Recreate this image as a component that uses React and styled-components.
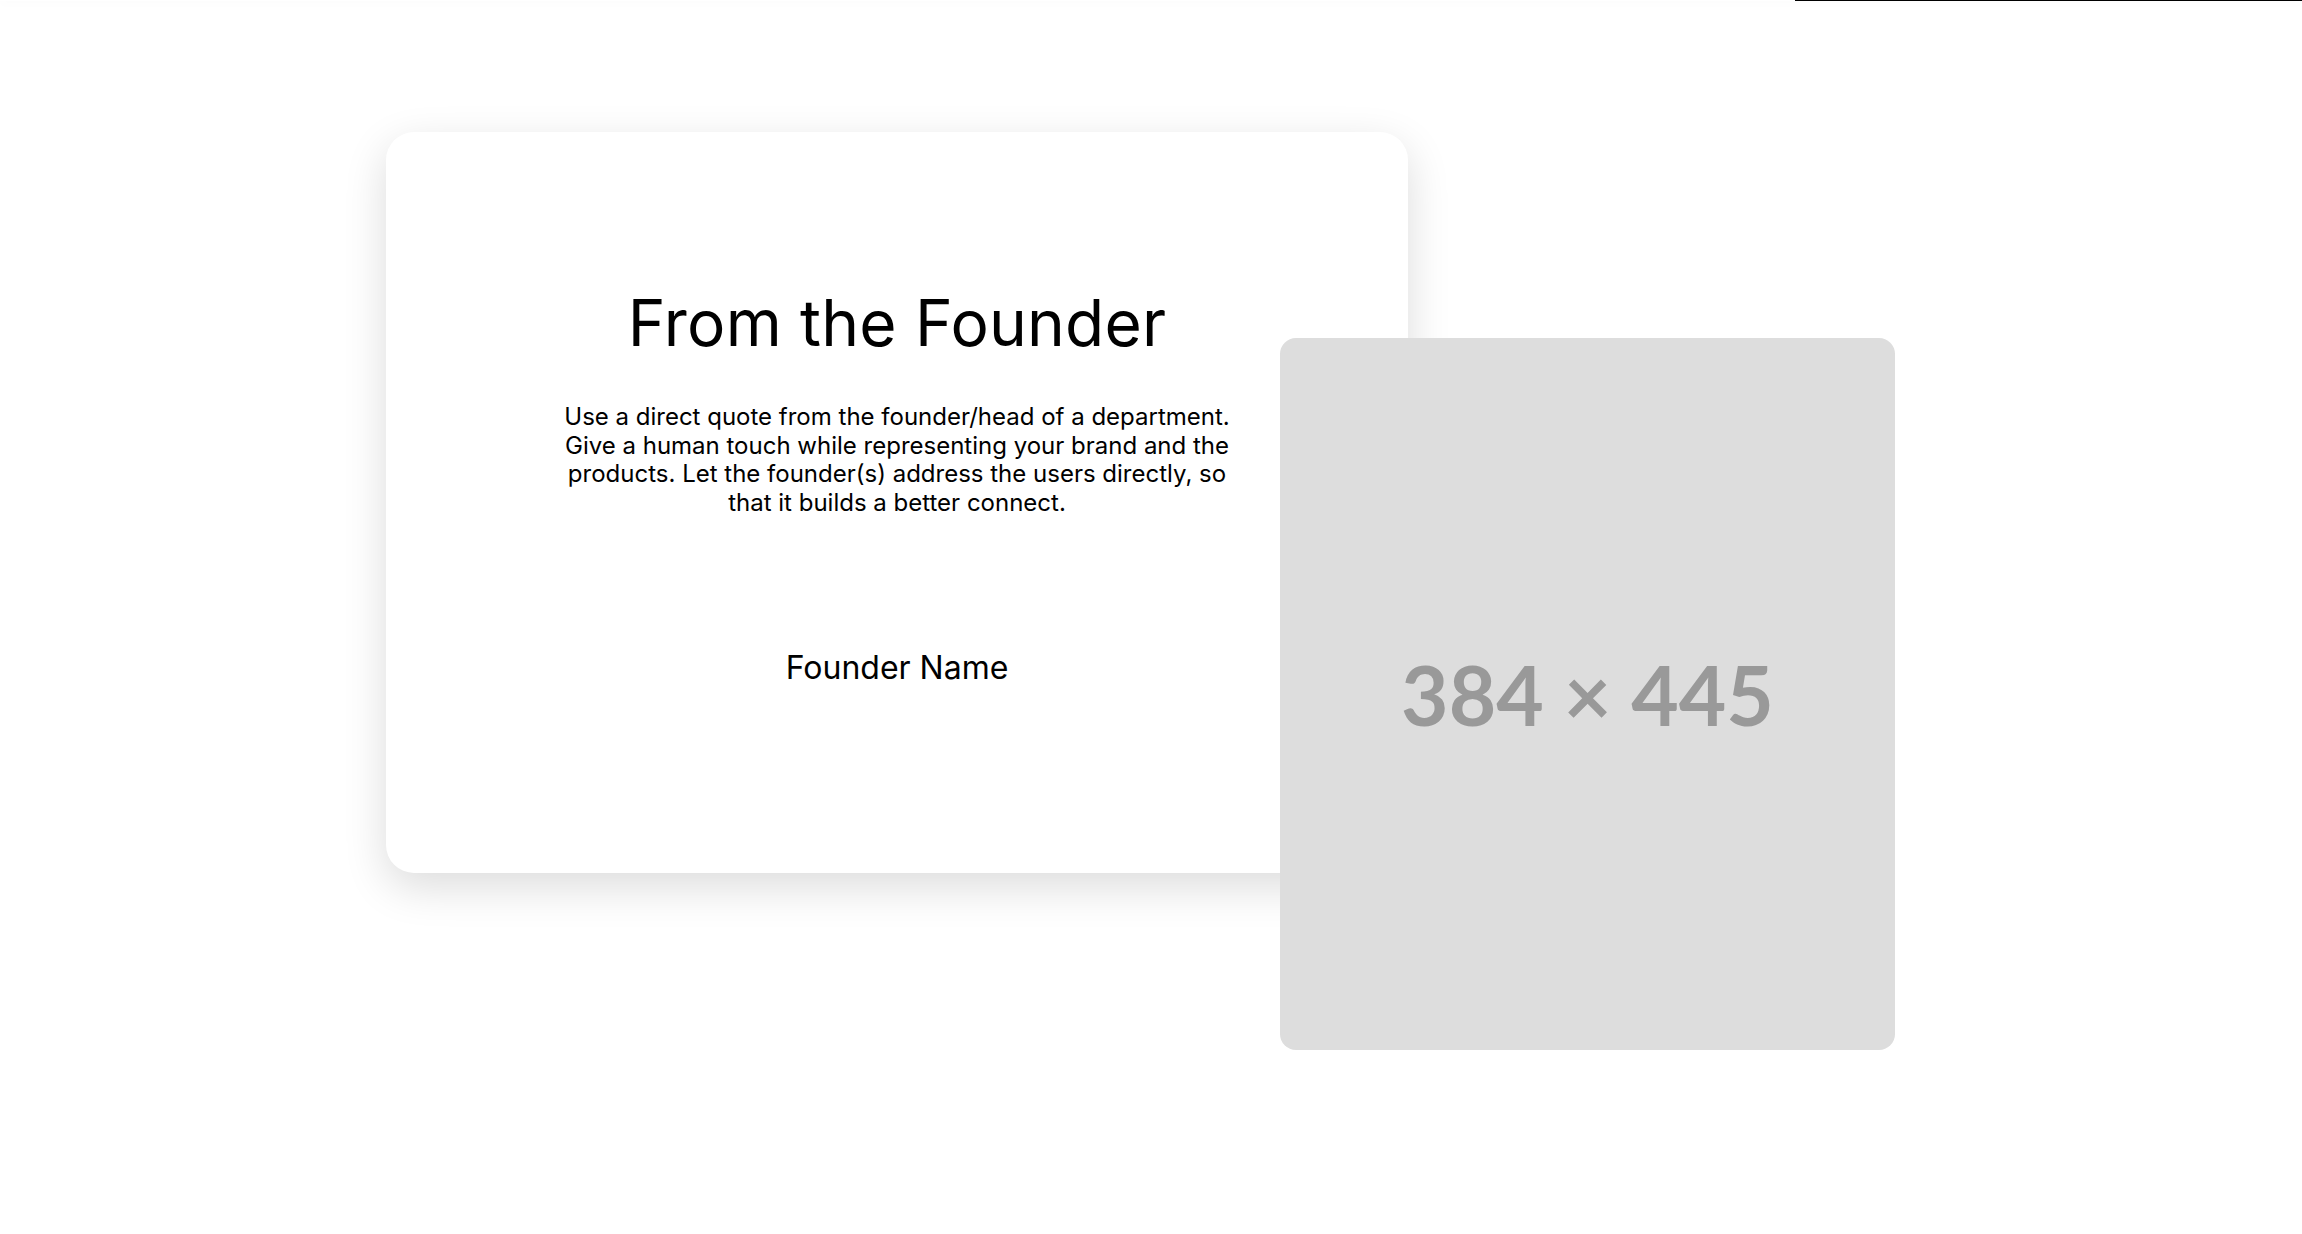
import React from 'react'
import styled, { createGlobalStyle } from 'styled-components'

const GlobalStyle = createGlobalStyle`
  html, body {
    margin: 0;
    padding: 0;
    background: #ffffff;
  }
  body {
    font-family: Inter, "Noto Sans", "Liberation Sans", sans-serif;
    color: #000;
    overflow: hidden;
  }
  *{
    box-sizing: border-box;
  }
`

const TopBar = styled.header`
  height: 1px;
  width: 100%;
  background: #fff;
  box-shadow: 0 1px 8px rgba(0, 0, 0, 0.09);
  display: flex;
  justify-content: flex-end;
`

const Indicator = styled.span`
  width: ${p => p.width}px;
  height: 1px;
  background: #000;
`

const FounderSection = styled.section`
  display: flex;
  align-items: flex-start;
  padding: 131px 0 0 386px;
`

const QuoteCard = styled.div`
  flex: none;
  width: 1022px;
  height: 741px;
  background: #fff;
  border-radius: 28px;
  box-shadow: 0 14px 44px rgba(0, 0, 0, 0.14);
  display: flex;
  flex-direction: column;
  align-items: center;
  padding-top: 153px;
  text-align: center;
`

const Title = styled.h2`
  margin: 0;
  font-size: 64px;
  font-weight: 400;
  line-height: 1.2;
  letter-spacing: 0.2px;
`

const Quote = styled.p`
  margin: 41px 0 0;
  max-width: 690px;
  font-size: 24px;
  line-height: 1.2;
`

const FounderName = styled.p`
  margin: 131px 0 0;
  font-size: 32px;
  line-height: 1.2;
`

const Placeholder = styled.div`
  flex: none;
  width: 615px;
  height: 712px;
  margin: 206px 0 0 -128px;
  background: #dddddd;
  border-radius: 16px;
  display: flex;
  align-items: center;
  justify-content: center;
  color: #999999;
  font-family: Lato, "Liberation Sans", sans-serif;
  font-weight: 700;
  font-size: 82px;
  letter-spacing: 0;
`

const App = () => {
  return (
    <>
      <GlobalStyle />
      <TopBar>
        <Indicator width={507} />
      </TopBar>
      <FounderSection>
        <QuoteCard>
          <Title>From the Founder</Title>
          <Quote>
            Use a direct quote from the founder/head of a department. Give a human touch while
            representing your brand and the products. Let the founder(s) address the users
            directly, so that it builds a better connect.
          </Quote>
          <FounderName>Founder Name</FounderName>
        </QuoteCard>
        <Placeholder>384 × 445</Placeholder>
      </FounderSection>
    </>
  )
}

export default App
